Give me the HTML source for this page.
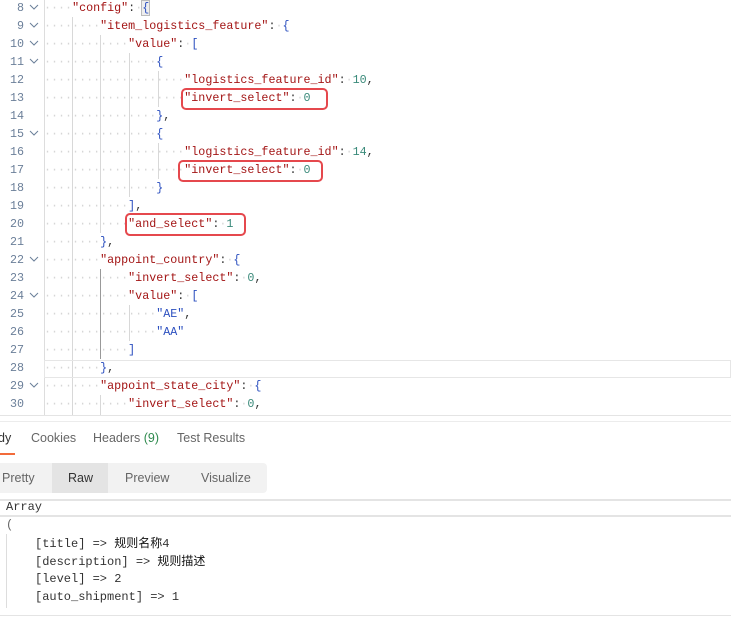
<!DOCTYPE html>
<html><head><meta charset="utf-8"><style>
*{margin:0;padding:0;box-sizing:border-box}
body{width:731px;height:621px;overflow:hidden;background:#fff;position:relative;font-family:"Liberation Sans",sans-serif}
.ln{position:absolute;left:0;height:18px;line-height:18px;width:731px;font-family:"Liberation Mono",monospace;font-size:11.7px;white-space:pre}
.num{position:absolute;left:0;width:24px;text-align:right;color:#6b7f99}
.chev{position:absolute;left:29px;top:5px;width:10px;height:6px}
.code{position:absolute;left:44px}
.d{color:#d6d6d6}
.k{color:#a31515}
.n{color:#3a8a7a}
.b{color:#2b4fbf}
.p{color:#333}
.g{position:absolute;width:1px;background:#d8d8d8}
.box{position:absolute;border:2.5px solid #e5484d;border-radius:5px}
.hr{position:absolute;left:0;width:731px;height:1px;background:#e4e4e4}
.tab{position:absolute;top:431px;font-size:12.5px;color:#666}
.out{position:absolute;left:35px;height:18px;line-height:18px;font-family:"Liberation Mono","Noto Sans CJK SC",monospace;font-size:12px;color:#333;white-space:pre}
.cjk{font-family:"Noto Sans CJK SC",sans-serif;font-size:12px;color:#111}
</style></head><body>

<div class="g" style="left:44px;top:0;height:415px;background:#ddd"></div>
<div class="g" style="left:72px;top:17px;height:398px"></div>
<div class="g" style="left:100px;top:35px;height:198px"></div>
<div class="g" style="left:100px;top:269px;height:90px;background:#999"></div>
<div class="g" style="left:100px;top:395px;height:20px"></div>
<div class="g" style="left:129px;top:53px;height:144px"></div>
<div class="g" style="left:129px;top:305px;height:36px"></div>
<div class="g" style="left:158px;top:71px;height:36px"></div>
<div class="g" style="left:158px;top:143px;height:36px"></div>

<div style="position:absolute;left:44px;top:360px;width:687px;height:18px;border:1px solid #e6e6e6"></div>

<div class="ln" style="top:-1px"><span class="num">8</span><svg class="chev"><path d="M1 1l4 4 4-4" fill="none" stroke="#6b7f99"/></svg><span class="code"><span class="d">····</span><span class="k">"config"</span><span class="p">:</span><span class="d">·</span><span class="b" style="background:#eee;outline:1px solid #bbb">{</span></span></div>
<div class="ln" style="top:17px"><span class="num">9</span><svg class="chev"><path d="M1 1l4 4 4-4" fill="none" stroke="#6b7f99"/></svg><span class="code"><span class="d">········</span><span class="k">"item_logistics_feature"</span><span class="p">:</span><span class="d">·</span><span class="b">{</span></span></div>
<div class="ln" style="top:35px"><span class="num">10</span><svg class="chev"><path d="M1 1l4 4 4-4" fill="none" stroke="#6b7f99"/></svg><span class="code"><span class="d">············</span><span class="k">"value"</span><span class="p">:</span><span class="d">·</span><span class="b">[</span></span></div>
<div class="ln" style="top:53px"><span class="num">11</span><svg class="chev"><path d="M1 1l4 4 4-4" fill="none" stroke="#6b7f99"/></svg><span class="code"><span class="d">················</span><span class="b">{</span></span></div>
<div class="ln" style="top:71px"><span class="num">12</span><span class="code"><span class="d">····················</span><span class="k">"logistics_feature_id"</span><span class="p">:</span><span class="d">·</span><span class="n">10</span><span class="p">,</span></span></div>
<div class="ln" style="top:89px"><span class="num">13</span><span class="code"><span class="d">····················</span><span class="k">"invert_select"</span><span class="p">:</span><span class="d">·</span><span class="n">0</span></span></div>
<div class="ln" style="top:107px"><span class="num">14</span><span class="code"><span class="d">················</span><span class="b">}</span><span class="p">,</span></span></div>
<div class="ln" style="top:125px"><span class="num">15</span><svg class="chev"><path d="M1 1l4 4 4-4" fill="none" stroke="#6b7f99"/></svg><span class="code"><span class="d">················</span><span class="b">{</span></span></div>
<div class="ln" style="top:143px"><span class="num">16</span><span class="code"><span class="d">····················</span><span class="k">"logistics_feature_id"</span><span class="p">:</span><span class="d">·</span><span class="n">14</span><span class="p">,</span></span></div>
<div class="ln" style="top:161px"><span class="num">17</span><span class="code"><span class="d">····················</span><span class="k">"invert_select"</span><span class="p">:</span><span class="d">·</span><span class="n">0</span></span></div>
<div class="ln" style="top:179px"><span class="num">18</span><span class="code"><span class="d">················</span><span class="b">}</span></span></div>
<div class="ln" style="top:197px"><span class="num">19</span><span class="code"><span class="d">············</span><span class="b">]</span><span class="p">,</span></span></div>
<div class="ln" style="top:215px"><span class="num">20</span><span class="code"><span class="d">············</span><span class="k">"and_select"</span><span class="p">:</span><span class="d">·</span><span class="n">1</span></span></div>
<div class="ln" style="top:233px"><span class="num">21</span><span class="code"><span class="d">········</span><span class="b">}</span><span class="p">,</span></span></div>
<div class="ln" style="top:251px"><span class="num">22</span><svg class="chev"><path d="M1 1l4 4 4-4" fill="none" stroke="#6b7f99"/></svg><span class="code"><span class="d">········</span><span class="k">"appoint_country"</span><span class="p">:</span><span class="d">·</span><span class="b">{</span></span></div>
<div class="ln" style="top:269px"><span class="num">23</span><span class="code"><span class="d">············</span><span class="k">"invert_select"</span><span class="p">:</span><span class="d">·</span><span class="n">0</span><span class="p">,</span></span></div>
<div class="ln" style="top:287px"><span class="num">24</span><svg class="chev"><path d="M1 1l4 4 4-4" fill="none" stroke="#6b7f99"/></svg><span class="code"><span class="d">············</span><span class="k">"value"</span><span class="p">:</span><span class="d">·</span><span class="b">[</span></span></div>
<div class="ln" style="top:305px"><span class="num">25</span><span class="code"><span class="d">················</span><span class="b">"AE"</span><span class="p">,</span></span></div>
<div class="ln" style="top:323px"><span class="num">26</span><span class="code"><span class="d">················</span><span class="b">"AA"</span></span></div>
<div class="ln" style="top:341px"><span class="num">27</span><span class="code"><span class="d">············</span><span class="b">]</span></span></div>
<div class="ln" style="top:359px"><span class="num">28</span><span class="code"><span class="d">········</span><span class="b">}</span><span class="p">,</span></span></div>
<div class="ln" style="top:377px"><span class="num">29</span><svg class="chev"><path d="M1 1l4 4 4-4" fill="none" stroke="#6b7f99"/></svg><span class="code"><span class="d">········</span><span class="k">"appoint_state_city"</span><span class="p">:</span><span class="d">·</span><span class="b">{</span></span></div>
<div class="ln" style="top:395px"><span class="num">30</span><span class="code"><span class="d">············</span><span class="k">"invert_select"</span><span class="p">:</span><span class="d">·</span><span class="n">0</span><span class="p">,</span></span></div>

<div class="box" style="left:181px;top:88px;width:147px;height:22px"></div>
<div class="box" style="left:178px;top:160px;width:145px;height:22px"></div>
<div class="box" style="left:125px;top:213px;width:121px;height:23px"></div>

<div class="hr" style="top:415px"></div>
<div class="hr" style="top:421px;background:#ececec"></div>

<div class="tab" style="left:-2px;color:#333">dy</div>
<div style="position:absolute;left:0;top:453px;width:15px;height:2px;background:#f26b3a"></div>
<div class="tab" style="left:31px">Cookies</div>
<div class="tab" style="left:93px">Headers <span style="color:#2e8a4e">(9)</span></div>
<div class="tab" style="left:177px">Test Results</div>

<div style="position:absolute;left:0;top:463px;width:267px;height:30px;background:#f2f2f2;border-radius:0 4px 4px 0"></div>
<div style="position:absolute;left:52px;top:463px;width:56px;height:30px;background:#e4e4e4"></div>
<div class="tab" style="left:2px;top:471px">Pretty</div>
<div class="tab" style="left:68px;top:471px;color:#333">Raw</div>
<div class="tab" style="left:125px;top:471px">Preview</div>
<div class="tab" style="left:201px;top:471px">Visualize</div>

<div class="hr" style="top:499px;height:2px"></div>
<div class="hr" style="top:515px;height:2px"></div>
<div class="g" style="left:6px;top:534px;height:74px;background:#ddd"></div>
<div class="out" style="left:6px;top:498px">Array</div>
<div class="out" style="left:6px;top:516px;color:#666">(</div>
<div class="out" style="top:534px">[title] =&gt; <span class="cjk">规则名称</span>4</div>
<div class="out" style="top:552px">[description] =&gt; <span class="cjk">规则描述</span></div>
<div class="out" style="top:570px">[level] =&gt; 2</div>
<div class="out" style="top:588px">[auto_shipment] =&gt; 1</div>
<div class="hr" style="top:615px"></div>
</body></html>
